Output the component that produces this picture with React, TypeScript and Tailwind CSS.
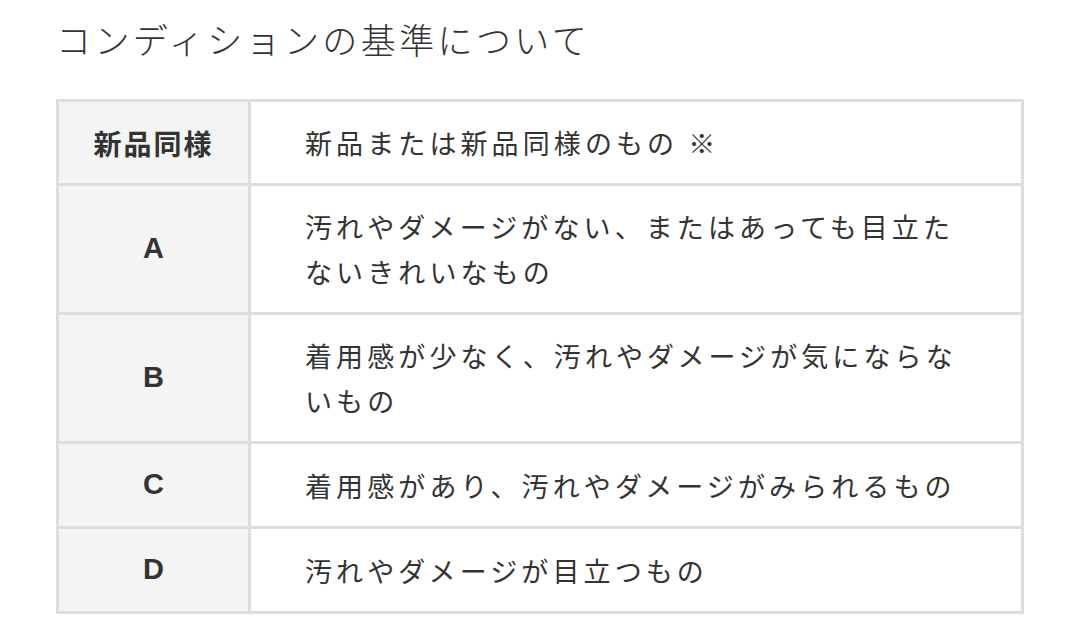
const ROWS: { grade: string; desc: string }[] = [
  { grade: '新品同様', desc: '新品または新品同様のもの ※' },
  { grade: 'A', desc: '汚れやダメージがない、またはあっても目立たないきれいなもの' },
  { grade: 'B', desc: '着用感が少なく、汚れやダメージが気にならないもの' },
  { grade: 'C', desc: '着用感があり、汚れやダメージがみられるもの' },
  { grade: 'D', desc: '汚れやダメージが目立つもの' },
]

export default function App() {
  return (
    <div
      className="w-[1080px] h-[643px] bg-white text-[#333] pl-[56px] pt-[17px]"
      style={{ fontFamily: '"Noto Sans CJK JP", "Noto Sans", sans-serif' }}
    >
      <h2 className="text-[35px] leading-[44px] tracking-[3.4px] font-light text-[#333]">
        コンディションの基準について
      </h2>

      <div className="mt-[38px] w-[968px] border-[3px] border-[#dedede]">
        {ROWS.map((row, i) => (
          <div key={row.grade} className={`flex ${i > 0 ? 'border-t-[3px] border-[#dedede]' : ''}`}>
            <div className="w-[192px] shrink-0 bg-[#f4f4f4] border-r-[3px] border-[#dedede] flex items-center justify-center">
              {row.grade.length === 1 ? (
                <span className="text-[29px] font-bold text-[#333] font-['Liberation_Sans',Arial,sans-serif]">
                  {row.grade}
                </span>
              ) : (
                <span className="text-[28px] font-bold tracking-[2px] text-[#333]">{row.grade}</span>
              )}
            </div>
            <div className={`flex-1 pl-[54px] pr-[48px] ${i === 3 || i === 4 ? 'py-[18.5px]' : 'py-[18px]'}`}>
              <p className="text-[27px] leading-[45px] tracking-[4.1px] text-[#333] w-[670px]">{row.desc}</p>
            </div>
          </div>
        ))}
      </div>
    </div>
  )
}
